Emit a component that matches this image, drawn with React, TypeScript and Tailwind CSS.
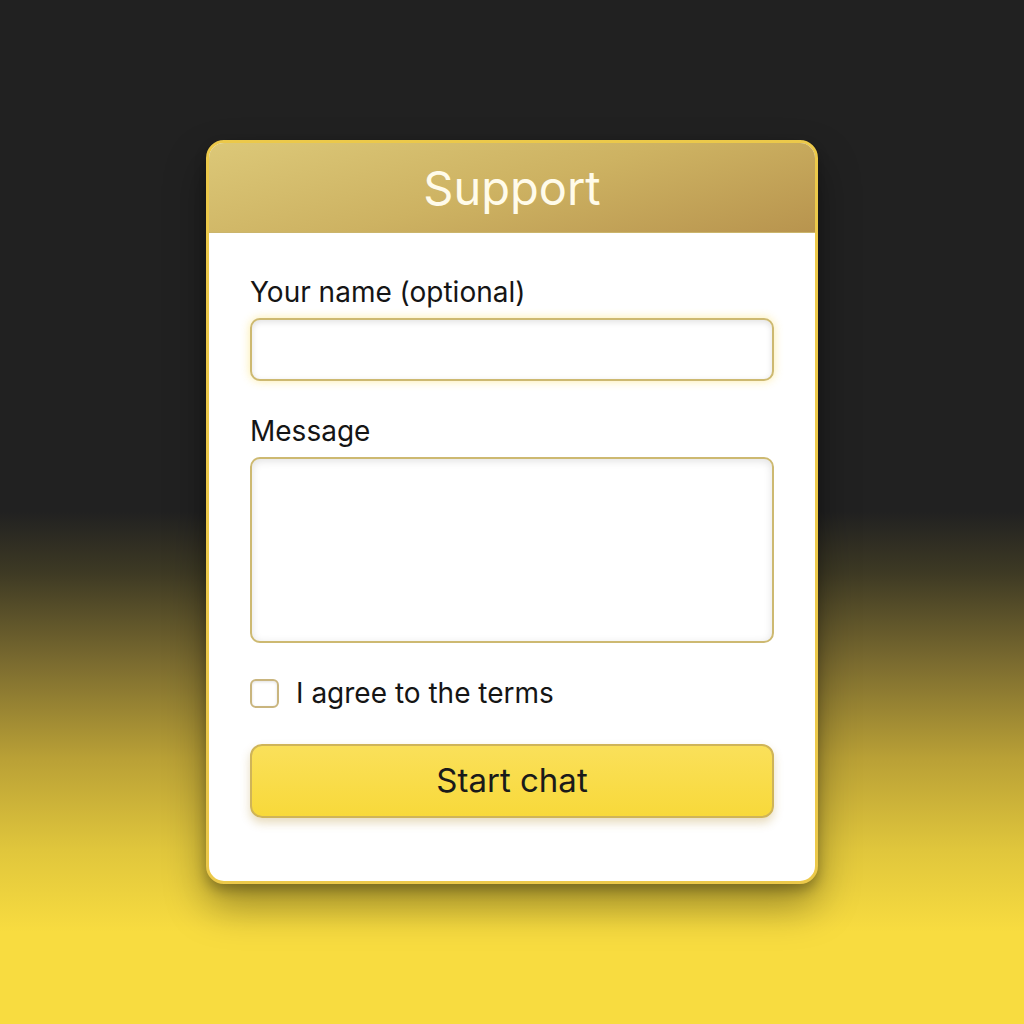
import React from "react";

export default function App() {
  return (
    <div
      className="w-[1024px] h-[1024px] flex items-start justify-center pt-[140px] bg-[linear-gradient(to_bottom,#212121_0%,#212121_50%,#3e3a24_56%,#7d6d30_65%,#b9a036_74%,#e0c63c_83%,#f8dc40_91%,#f8dc40_100%)]"
      style={{ fontFamily: "Inter, 'Noto Sans', sans-serif" }}
    >
      <div className="w-[612px] h-[744px] rounded-[18px] border-[3px] border-[#ecc94a] bg-white overflow-hidden flex flex-col shadow-[0_22px_40px_rgba(0,0,0,0.35),0_6px_12px_rgba(0,0,0,0.25)]">
        <div className="h-[90px] shrink-0 flex items-center justify-center bg-[linear-gradient(165deg,#dcc878_0%,#cdb262_50%,#b8944e_100%)] border-b border-[#cbb56c]">
          <span className="text-[47px] leading-none text-[#fffbea] font-normal">Support</span>
        </div>
        <div className="flex-1 flex flex-col px-[41px] pt-[42px]">
          <label className="text-[28px] leading-[34px] text-[#151515]">Your name (optional)</label>
          <div className="mt-[9px] h-[63px] rounded-[10px] border-2 border-[#cdb971] bg-white shadow-[inset_0_2px_6px_rgba(0,0,0,0.12),0_0_10px_rgba(250,215,60,0.45)]" />
          <label className="mt-[33px] text-[28px] leading-[34px] text-[#151515]">Message</label>
          <div className="mt-[9px] h-[186px] rounded-[10px] border-2 border-[#cdb971] bg-white shadow-[inset_0_2px_8px_rgba(0,0,0,0.12)]" />
          <div className="mt-[36px] flex items-center h-[28px]">
            <div className="w-[29px] h-[29px] rounded-[6px] border-2 border-[#c9b57e] bg-white shadow-[inset_0_1px_3px_rgba(0,0,0,0.12)]" />
            <span className="ml-[17px] text-[28px] leading-[34px] text-[#151515]">I agree to the terms</span>
          </div>
          <button className="mt-[37px] h-[74px] w-full rounded-[12px] border-2 border-[#cfb458] bg-[linear-gradient(to_bottom,#fae05a,#f8d93a)] text-[33px] text-[#1a1a1a] shadow-[0_5px_10px_rgba(180,140,40,0.3)]">
            Start chat
          </button>
        </div>
      </div>
    </div>
  );
}
